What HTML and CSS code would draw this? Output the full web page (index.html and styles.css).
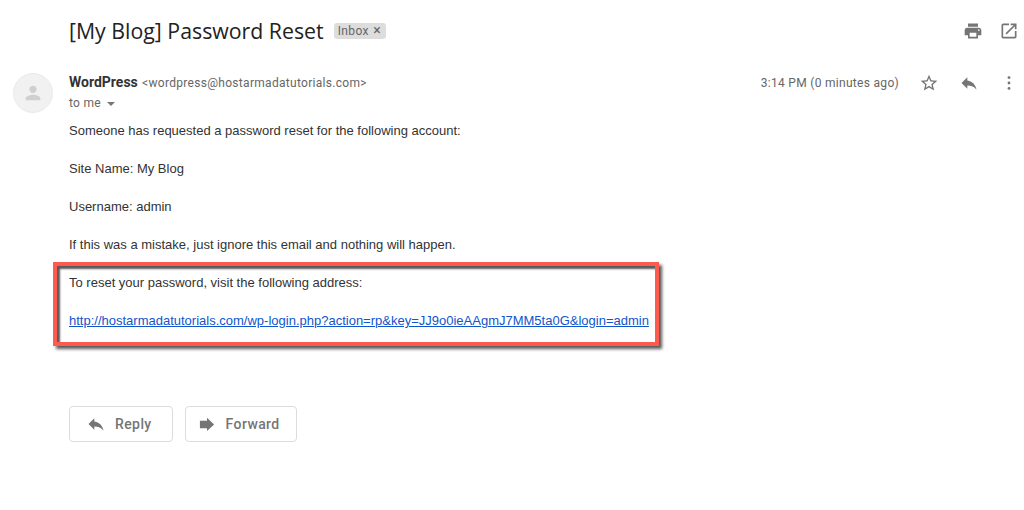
FILE: index.html
```html
<!DOCTYPE html>
<html lang="en">
<head>
    <meta charset="UTF-8">
    <title>[My Blog] Password Reset</title>
    <link rel="stylesheet" href="styles.css">
</head>
<body>

    <header class="subject-row">
        <h1 class="subject">[My Blog] Password Reset</h1>
        <span class="label">Inbox <span class="label-x">×</span></span>
        <div class="subject-icons">
            <svg class="icon" viewBox="0 0 24 24"><path d="M19 8H5c-1.66 0-3 1.34-3 3v6h4v4h12v-4h4v-6c0-1.66-1.34-3-3-3zm-3 11H8v-5h8v5zm3-7c-.55 0-1-.45-1-1s.45-1 1-1 1 .45 1 1-.45 1-1 1zm-1-9H6v4h12V3z"/></svg>
            <svg class="icon" viewBox="0 0 24 24"><path d="M19 19H5V5h7V3H5c-1.11 0-2 .9-2 2v14c0 1.1.89 2 2 2h14c1.1 0 2-.9 2-2v-7h-2v7zM14 3v2h3.59l-9.83 9.83 1.41 1.41L19 6.41V10h2V3h-7z"/></svg>
        </div>
    </header>

    <section class="message">
        <div class="avatar">
            <svg viewBox="0 0 24 24"><path d="M12 12c2.2 0 4-1.8 4-4s-1.8-4-4-4-4 1.8-4 4 1.800 4 4 4zm0 2c-2.700 0-8 1.340-8 4v2h16v-2c0-2.660-5.300-4-8-4z"/></svg>
        </div>
        <div class="message-main">
            <div class="message-head">
                <div class="sender">
                    <div><b class="sender-name">WordPress</b> <span class="sender-mail">&lt;wordpress@hostarmadatutorials.com&gt;</span></div>
                    <div class="to-me">to me <span class="caret"></span></div>
                </div>
                <div class="message-meta">
                    <span class="time">3:14 PM (0 minutes ago)</span>
                    <svg class="icon star" viewBox="0 0 24 24"><path d="M22 9.240l-7.190-.62L12 2 9.190 8.630 2 9.240l5.460 4.730L5.820 21 12 17.270 18.180 21l-1.630-7.030L22 9.240zM12 15.400l-3.760 2.270 1-4.280-3.320-2.880 4.380-.38L12 6.100l1.710 4.040 4.380.38-3.320 2.880 1 4.280L12 15.400z"/></svg>
                    <svg class="icon reply" viewBox="0 0 24 24"><path d="M10 9V5l-7 7 7 7v-4.100c5 0 8.500 1.600 11 5.100-1-5-4-10-11-11z"/></svg>
                    <svg class="icon more" viewBox="0 0 24 24"><circle cx="12" cy="5.500" r="1.700"/><circle cx="12" cy="12" r="1.700"/><circle cx="12" cy="18.500" r="1.700"/></svg>
                </div>
            </div>

            <div class="mail-body">
                <p>Someone has requested a password reset for the following account:</p>
                <p>Site Name: My Blog</p>
                <p>Username: admin</p>
                <p>If this was a mistake, just ignore this email and nothing will happen.</p>
                <div class="highlight">
                    <p>To reset your password, visit the following address:</p>
                    <p><a href="#">http://hostarmadatutorials.com/wp-login.php?action=rp&amp;key=JJ9o0ieAAgmJ7MM5ta0G&amp;login=admin</a></p>
                </div>
            </div>

            <div class="actions">
                <button class="action-btn reply-btn">
                    <svg viewBox="0 0 24 24"><path d="M10 9V5l-7 7 7 7v-4.100c5 0 8.500 1.600 11 5.100-1-5-4-10-11-11z"/></svg>
                    Reply
                </button>
                <button class="action-btn">
                    <svg viewBox="0 0 24 24"><path d="M12 4.500 20.500 12.500 12 20.500V17H3.500V8H12z"/></svg>
                    Forward
                </button>
            </div>
        </div>
    </section>

</body>
</html>
```

FILE: styles.css
```css
/* General Page Styles */
html, body {
    height: 510px;
    overflow: hidden;
}

body {
    margin: 0;
    background-color: #fff;
    font-family: "Liberation Sans", Arial, sans-serif;
    font-size: 13px;
    color: #333;
}

.icon {
    width: 20px;
    height: 20px;
    fill: #757575;
    flex: none;
}

/* Subject */
.subject-row {
    display: flex;
    align-items: center;
    height: 24px;
    padding: 19px 5px 0 69px;
}

.subject {
    margin: 0 0 2px;
    font-family: "Open Sans", sans-serif;
    font-size: 21.3px;
    font-weight: 400;
    color: #222;
}

.label {
    margin-left: 10px;
    padding: 1px 5px 1px 4px;
    border-radius: 3px;
    background-color: #ddd;
    font-family: Roboto, sans-serif;
    font-size: 12px;
    letter-spacing: 0.4px;
    color: #666;
}

.label-x {
    margin-left: 1px;
    font-size: 14px;
    line-height: 12px;
}

.subject-icons {
    display: flex;
    gap: 16px;
    margin-left: auto;
}

/* Message */
.message {
    display: flex;
    padding: 30px 0 0 13px;
}

.avatar {
    display: flex;
    align-items: center;
    justify-content: center;
    flex: none;
    width: 38px;
    height: 38px;
    margin-right: 16px;
    border: 1px solid #eaeaea;
    border-radius: 50%;
    background-color: #f1f1f1;
}

.avatar svg {
    width: 22px;
    height: 22px;
    fill: #d0d0d0;
}

.message-main {
    flex: 1;
}

.message-head {
    display: flex;
    justify-content: space-between;
    font-family: Roboto, sans-serif;
    font-size: 12px;
    letter-spacing: 0.3px;
}

.sender {
    margin-top: -1px;
    line-height: 20px;
}

.sender-name {
    font-size: 14px;
    font-weight: 700;
    letter-spacing: 0;
    color: #333;
}

.sender-mail {
    margin-left: 1px;
    color: #666;
}

.to-me {
    color: #666;
}

.caret {
    display: inline-block;
    margin-left: 3px;
    vertical-align: middle;
    border-top: 4px solid #777;
    border-left: 4px solid transparent;
    border-right: 4px solid transparent;
}

.message-meta {
    display: flex;
    align-items: flex-start;
    padding-right: 5px;
    height: 20px;
}

.time {
    margin-right: 20px;
    color: #666;
    line-height: 20px;
}

.star {
    margin-right: 20px;
}

.reply {
    margin-right: 20px;
}

/* Mail body */
.mail-body {
    margin-top: 9px;
    line-height: 18px;
}

.mail-body p {
    margin: 0 0 20px;
}

.highlight {
    width: 586px;
    height: 68px;
    margin: -12px 0 0 -16px;
    padding: 8px 0 0 12px;
    border: 4px solid #ff5a4d;
    box-shadow: inset 3px 3px 2px rgba(0, 0, 0, 0.65), 3px 3px 3px rgba(0, 0, 0, 0.65);
}

.highlight a {
    color: #1155cc;
}

/* Buttons */
.actions {
    display: flex;
    gap: 12px;
    margin-top: 60px;
}

.action-btn {
    display: flex;
    align-items: center;
    height: 36px;
    padding: 0 16px 0 11px;
    border: 1px solid #dadce0;
    border-radius: 4px;
    background-color: #fff;
    font-family: Roboto, sans-serif;
    font-size: 14px;
    font-weight: 500;
    letter-spacing: 0.4px;
    color: #757575;
}

.reply-btn {
    padding: 0 20px 0 16px;
}

.action-btn svg {
    width: 20px;
    height: 20px;
    margin-right: 9px;
    fill: #757575;
}
```
